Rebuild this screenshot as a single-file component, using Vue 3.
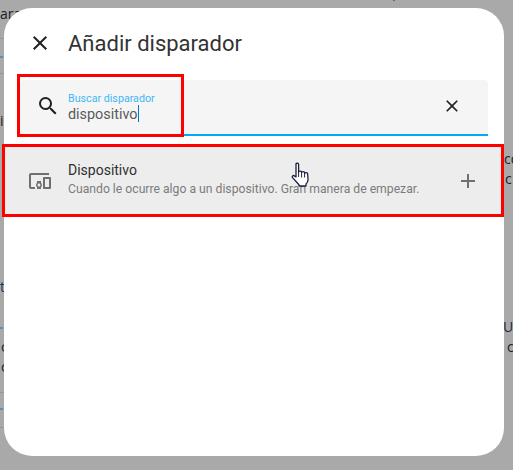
<script setup>
// bits of the page behind the dimmed overlay, only visible at the dialog edges
const behind = [
  { text: 'Si la casa esta sola a la noche se activa el modo de la alarma, todo lo demas se cierra en la casa de la calle', x: 2, y: -15, color: '#3a1a2a' },
  { text: 'ara que la automatización dispare lo que te di', x: 0, y: 5, color: '#1a1a2a' },
  { text: 'i', x: 0, y: 112, color: '#20201a' },
  { text: 't', x: 0, y: 278, color: '#0d3a5c' },
  { text: 'c', x: 1, y: 338, color: '#1a1a2a' },
  { text: 'c', x: 1, y: 358, color: '#1a1a2a' },
  { text: 'co', x: 504, y: 150, color: '#1a1a2a' },
  { text: 'c', x: 505, y: 170, color: '#1a1a2a' },
  { text: 'Ur', x: 503, y: 318, color: '#1a2a3a' },
  { text: 'c', x: 507, y: 338, color: '#1a1a2a' },
]
const lines = [38, 73, 392, 427]
const dashes = [56, 327, 408]
</script>

<template>
  <div class="page">
    <div class="behind">
      <span
        v-for="b in behind"
        :key="b.text + b.y"
        class="behind-text"
        :style="{ left: b.x + 'px', top: b.y + 'px', color: b.color }"
      >{{ b.text }}</span>
      <i v-for="y in lines" :key="y" class="behind-line" :style="{ top: y + 'px' }"></i>
      <i v-for="y in dashes" :key="y" class="behind-dash" :style="{ top: y + 'px' }"></i>
    </div>

    <div class="dialog">
      <!-- Header -->
      <div class="header">
        <svg class="icon close" viewBox="0 0 24 24">
          <path d="M19 6.41 17.59 5 12 10.59 6.41 5 5 6.41 10.59 12 5 17.59 6.41 19 12 13.41 17.59 19 19 17.59 13.41 12z" />
        </svg>
        <h2>Añadir disparador</h2>
      </div>

      <!-- Search -->
      <div class="search">
        <svg class="icon" viewBox="0 0 24 24">
          <path d="M9.5 3A6.5 6.5 0 0 1 16 9.5c0 1.61-.59 3.09-1.56 4.23l.27.27h.79l5 5-1.5 1.5-5-5v-.79l-.27-.27A6.52 6.52 0 0 1 9.5 16 6.5 6.5 0 0 1 3 9.5 6.5 6.5 0 0 1 9.5 3m0 2C7 5 5 7 5 9.5S7 14 9.5 14 14 12 14 9.5 12 5 9.5 5z" />
        </svg>
        <div class="search-text">
          <label>Buscar disparador</label>
          <div class="value">dispositivo<span class="caret"></span></div>
        </div>
        <svg class="icon clear" viewBox="0 0 24 24">
          <path d="M19 6.41 17.59 5 12 10.59 6.41 5 5 6.41 10.59 12 5 17.59 6.41 19 12 13.41 17.59 19 19 17.59 13.41 12z" />
        </svg>
      </div>

      <!-- Result -->
      <div class="item">
        <svg class="icon device" viewBox="0 0 24 24">
          <path d="M3 6h18V4H3c-1.1 0-2 .9-2 2v12c0 1.1.9 2 2 2h4v-2H3V6zm10 6H9v1.78c-.61.55-1 1.33-1 2.22s.39 1.67 1 2.22V20h4v-1.78c.61-.55 1-1.34 1-2.22s-.39-1.67-1-2.22V12zm-2 5.5c-.83 0-1.5-.67-1.5-1.5s.67-1.5 1.5-1.5 1.5.67 1.5 1.5-.67 1.5-1.5 1.5zM22 8h-6c-.5 0-1 .5-1 1v10c0 .5.5 1 1 1h6c.5 0 1-.5 1-1V9c0-.5-.5-1-1-1zm-1 10h-4v-8h4v8z" />
        </svg>
        <div class="item-text">
          <div class="item-title">Dispositivo</div>
          <div class="item-sub">Cuando le ocurre algo a un dispositivo. Gran manera de empezar.</div>
        </div>
        <svg class="icon plus" viewBox="0 0 24 24">
          <path d="M19 13h-6v6h-2v-6H5v-2h6V5h2v6h6v2z" />
        </svg>
      </div>
    </div>

    <!-- Annotations drawn over the screenshot -->
    <div class="mark mark-search"></div>
    <div class="mark mark-item"></div>

    <!-- Mouse pointer -->
    <svg class="pointer" width="22" height="26" viewBox="0 0 22 26">
      <path
        d="M5 2.2c0-1.5 2.600-1.500 2.600 0V10c0-1.200 3-1.200 3 0v.6c0-1.200 3-1.200 3 0v.8c0-1.200 3-1 3 .4l.4 5c.2 2.400-.8 4.200-2 5.200v2H8v-1.200L1.600 15.600c-1-1.300.6-2.700 1.800-1.700L5 15z"
        fill="#fff"
        stroke="#1c2040"
        stroke-width="1.300"
        stroke-linejoin="round"
      />
      <path d="M7.600 10v5M10.600 10.500v5M13.600 11v4.500" fill="none" stroke="#1c2040" stroke-width="1" />
    </svg>
  </div>
</template>

<style>
html,
body {
  margin: 0;
  background: #a9a9a9;
}
</style>

<style scoped>
.page {
  position: relative;
  width: 513px;
  height: 470px;
  overflow: hidden;
  box-sizing: border-box;
  padding: 8px 9px 14px 4px;
  background: #a9a9a9;
  font-family: Roboto, "Liberation Sans", sans-serif;
}

.behind-text {
  position: absolute;
  font-family: "Open Sans", sans-serif;
  font-size: 14px;
  line-height: 18px;
  white-space: nowrap;
}

.behind-line {
  position: absolute;
  left: 0;
  width: 4px;
  height: 1px;
  background: #989898;
}

.behind-dash {
  position: absolute;
  left: 0;
  width: 3px;
  height: 2px;
  background: #5a8fb8;
}

.dialog {
  position: relative;
  box-sizing: border-box;
  height: 448px;
  padding-top: 15px;
  background: #fff;
  border-radius: 28px;
}

.icon {
  display: block;
  flex: none;
  width: 24px;
  height: 24px;
  fill: #212121;
}

.header {
  display: flex;
  align-items: center;
  height: 40px;
  padding-left: 24px;
  gap: 16px;
}

.header h2 {
  margin: 0;
  font-size: 22px;
  font-weight: 400;
  color: #333;
}

.search {
  display: flex;
  align-items: center;
  box-sizing: border-box;
  height: 56px;
  margin: 17px 16px 0;
  padding: 0 26px 2px 16px;
  background: #f5f5f5;
  border-bottom: 2px solid #03a9f4;
  border-radius: 4px 4px 0 0;
}

.search .clear {
  width: 20px;
  height: 20px;
}

.search-text {
  flex: 1;
  margin-left: 8px;
  padding-top: 3px;
}

.search-text label {
  display: block;
  font-size: 10.700px;
  line-height: 13px;
  color: #3fb8f5;
}

.value {
  font-size: 14.400px;
  line-height: 19px;
  color: #5a5a5a;
}

.caret {
  display: inline-block;
  width: 1px;
  height: 17px;
  vertical-align: -3px;
  background: #0277bd;
}

.item {
  display: flex;
  align-items: center;
  height: 69px;
  margin-top: 10px;
  padding: 0 24px;
  box-sizing: border-box;
  background: #ededed;
}

.device,
.plus {
  fill: #6f6f6f;
}

.item-text {
  flex: 1;
  margin-left: 16px;
  padding-bottom: 2px;
}

.item-title {
  font-size: 14px;
  line-height: 20px;
  color: #303030;
}

.item-sub {
  font-size: 12.200px;
  line-height: 19px;
  color: #7c7c7c;
}

.mark {
  position: absolute;
  box-sizing: border-box;
  border: 3px solid #f00;
}

.mark-search {
  left: 17px;
  top: 74px;
  width: 167px;
  height: 63px;
}

.mark-item {
  left: 2px;
  top: 144px;
  width: 502px;
  height: 73px;
}

.pointer {
  position: absolute;
  left: 291px;
  top: 162px;
}
</style>
